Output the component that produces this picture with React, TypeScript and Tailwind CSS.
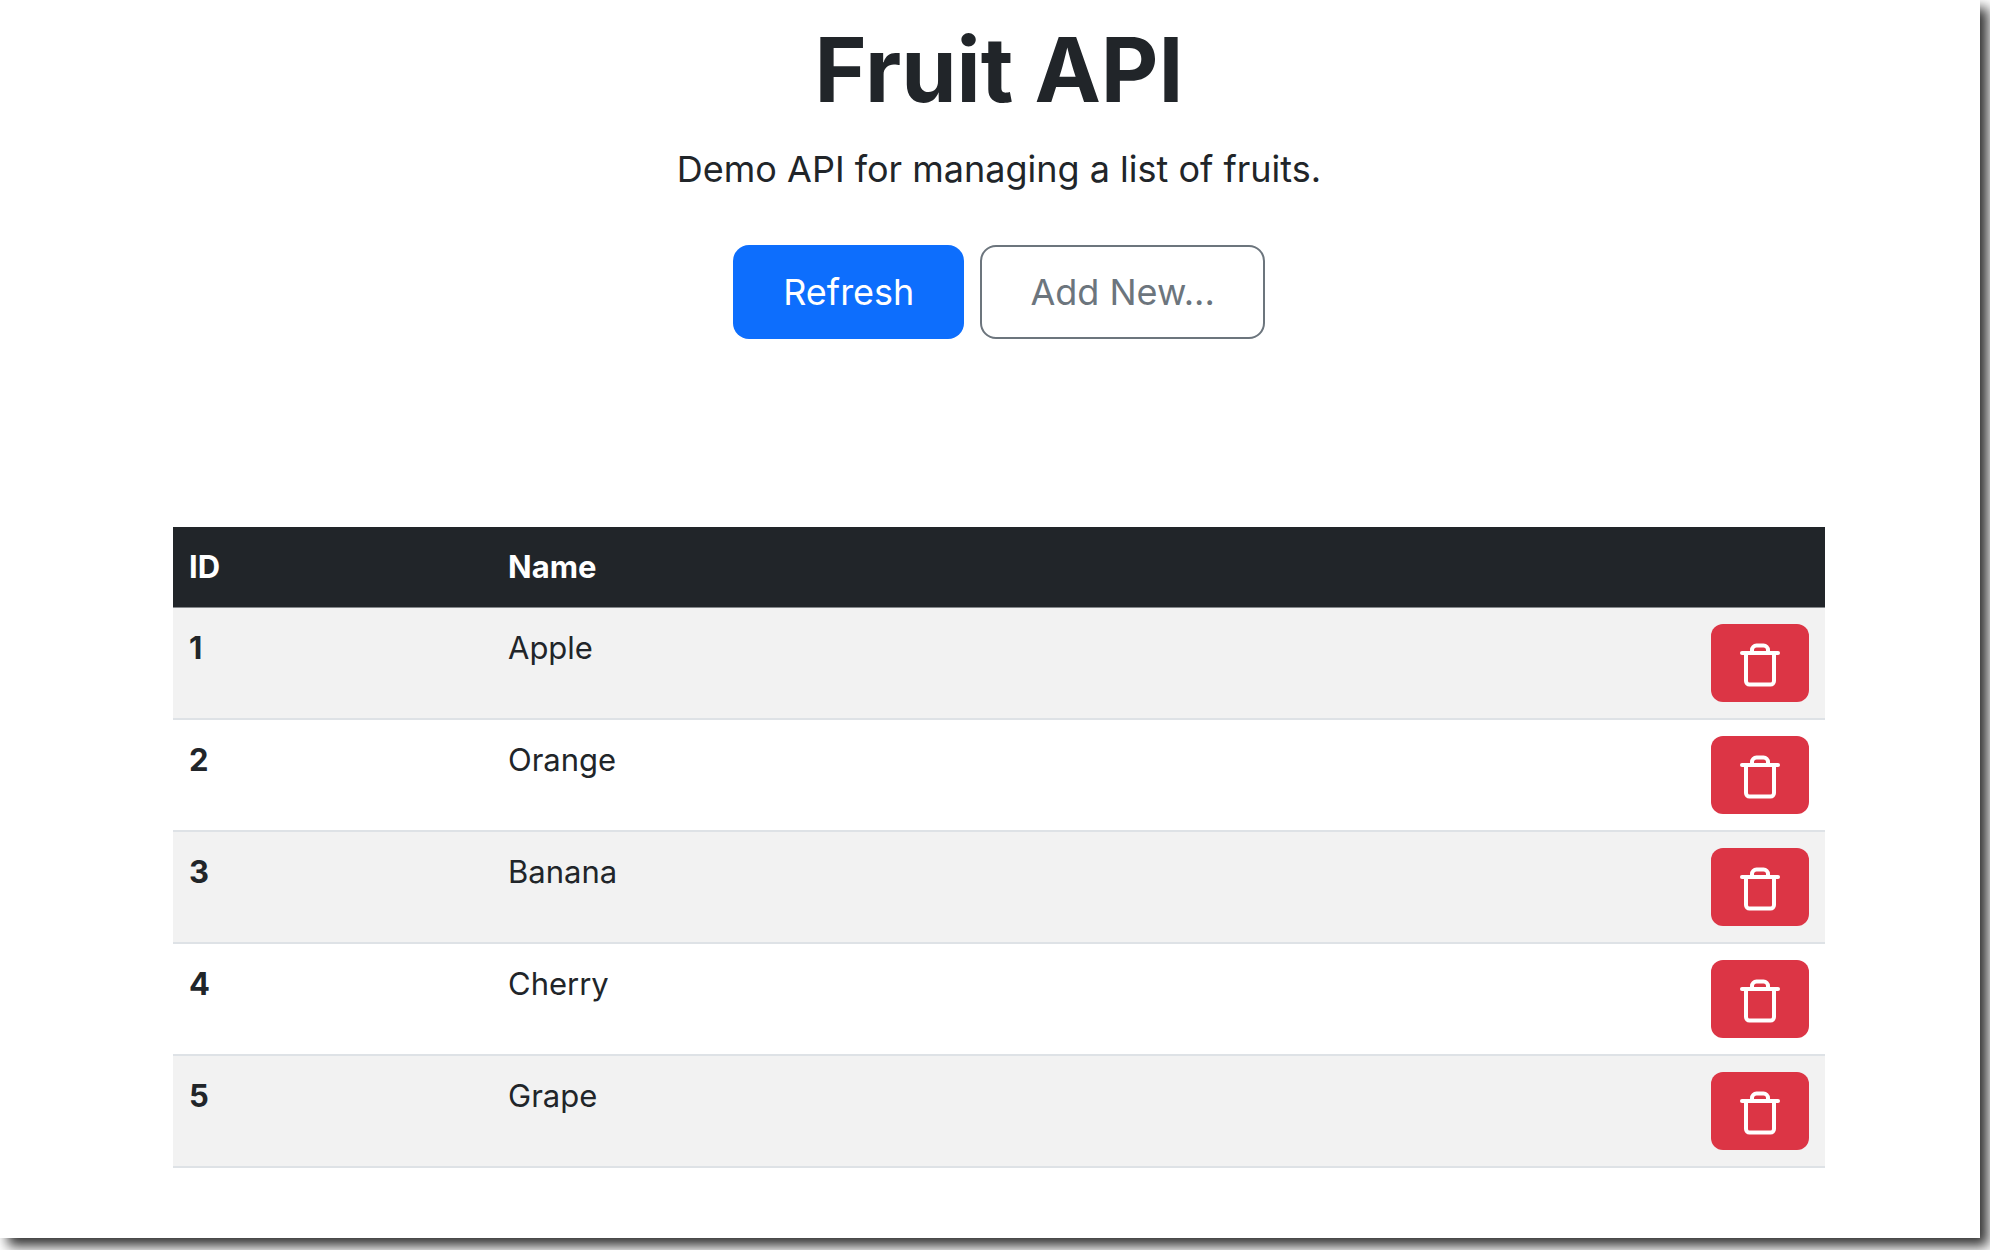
type Fruit = { id: number; name: string };

const fruits: Fruit[] = [
  { id: 1, name: "Apple" },
  { id: 2, name: "Orange" },
  { id: 3, name: "Banana" },
  { id: 4, name: "Cherry" },
  { id: 5, name: "Grape" },
];

function TrashIcon() {
  return (
    <svg
      className="h-11 w-10"
      viewBox="0 0 40 44"
      fill="none"
      stroke="currentColor"
      strokeWidth="4"
      strokeLinecap="round"
      strokeLinejoin="round"
      aria-hidden="true"
    >
      <path d="M2 10H38" />
      <path d="M12 10V7a4.5 4.5 0 0 1 4.5-4.5h7A4.5 4.5 0 0 1 28 7v3" strokeLinecap="butt" />
      <path d="M6 11V38a3.500 3.500 0 0 0 3.500 3.500H30.500a3.500 3.500 0 0 0 3.500-3.500V11" />
    </svg>
  );
}

function FruitRow({ fruit }: { fruit: Fruit }) {
  return (
    <tr className="border-b-2 border-[#dee2e6] odd:bg-[#f2f2f2]">
      <th scope="row" className="px-4 py-4 text-left align-top font-bold">
        {fruit.id}
      </th>
      <td className="px-4 py-4 align-top">{fruit.name}</td>
      <td className="px-4 py-4 text-right align-top">
        <button
          type="button"
          aria-label={`Delete ${fruit.name}`}
          className="ml-auto flex h-[78px] w-[98px] items-center justify-center rounded-xl bg-[#dc3545] pt-1 text-white"
        >
          <TrashIcon />
        </button>
      </td>
    </tr>
  );
}

export default function App() {
  return (
    <div className="flex min-h-screen flex-col overflow-hidden bg-white pr-[10px] pb-[12px] font-['Inter','Liberation_Sans',sans-serif] text-[#212529]">
      <main className="flex-1 bg-white pr-[155px] pl-[173px] shadow-[8px_8px_12px_rgba(0,0,0,0.8)]">
        <header className="flex flex-col items-center pt-4 text-center">
          <h1 className="text-[89px] leading-[108px] font-bold">Fruit API</h1>
          <p className="mt-4 text-[36px] leading-[58px]">Demo API for managing a list of fruits.</p>
          <div className="mt-[47px] flex gap-4">
            <button
              type="button"
              className="h-[94px] rounded-2xl bg-[#0d6efd] px-[50px] text-[36px] text-white"
            >
              Refresh
            </button>
            <button
              type="button"
              className="h-[94px] rounded-2xl border-2 border-[#6c757d] px-12 text-[36px] text-[#6c757d]"
            >
              Add New...
            </button>
          </div>
        </header>
        <table className="mt-[188px] w-full table-fixed border-collapse text-[31px] leading-[48px]">
          <thead className="bg-[#212529] text-white">
            <tr className="border-b border-[#85888b]">
              <th scope="col" className="w-[319px] px-4 py-4 text-left font-bold">
                ID
              </th>
              <th scope="col" className="px-4 py-4 text-left font-bold">
                Name
              </th>
              <td className="w-[131px]" />
            </tr>
          </thead>
          <tbody>
            {fruits.map((fruit) => (
              <FruitRow key={fruit.id} fruit={fruit} />
            ))}
          </tbody>
        </table>
      </main>
    </div>
  );
}
